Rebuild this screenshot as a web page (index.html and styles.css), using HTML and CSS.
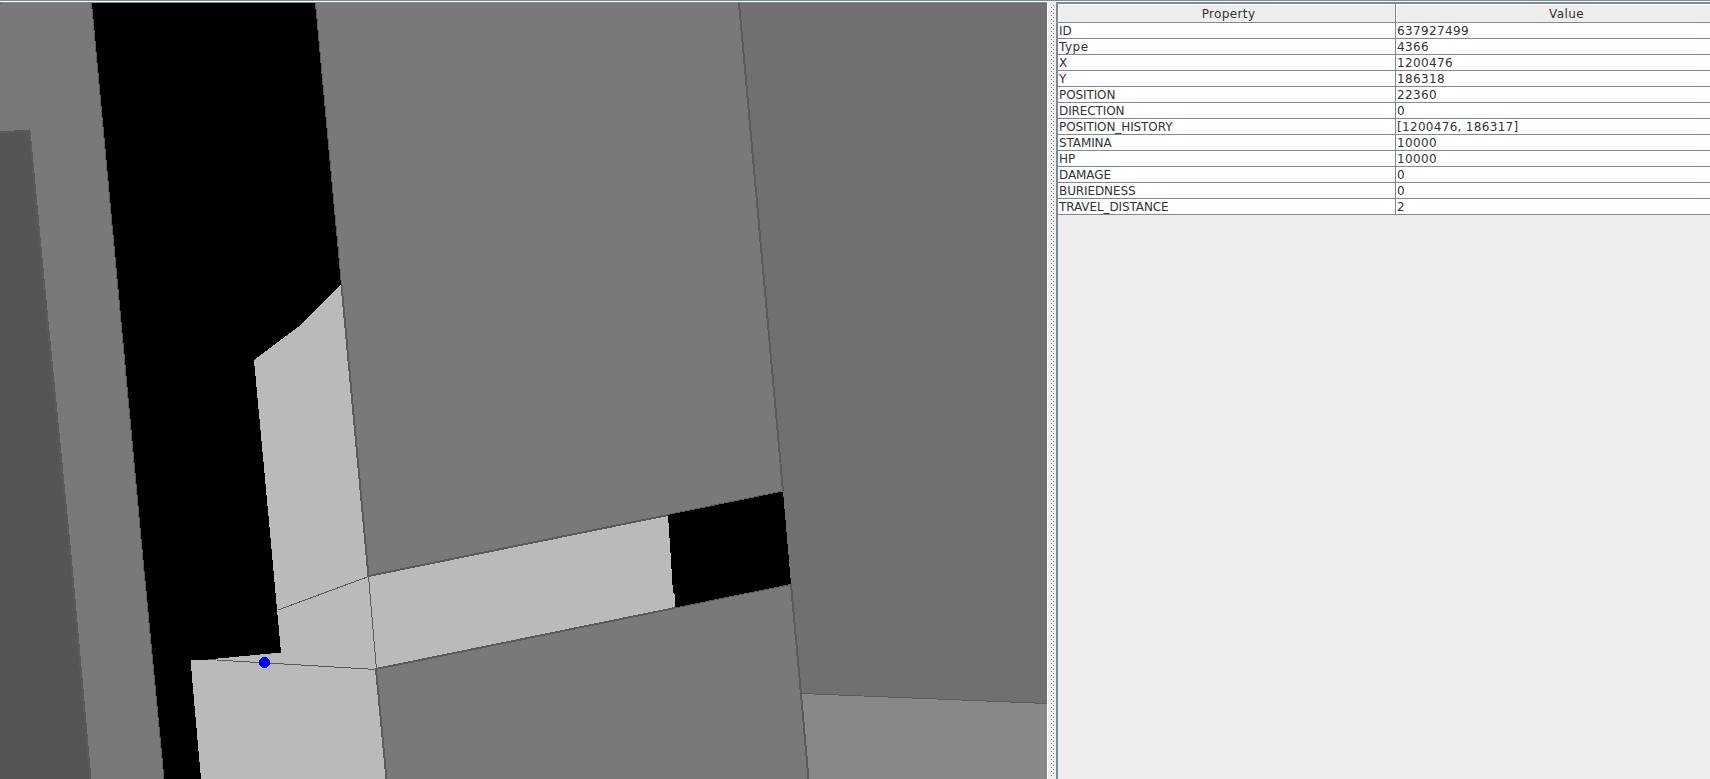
FILE: index.html
```
<!DOCTYPE html>
<html lang="en">
<head>
<meta charset="utf-8">
<title>Simulation viewer</title>
<link rel="stylesheet" href="styles.css">
</head>
<body>
<main class="viewer">
  <section class="map">
    <svg class="map-canvas" viewBox="0 3 1047 776" shape-rendering="crispEdges">
      <rect class="void" x="0" y="3" width="1047" height="776"/>
      <polygon class="building" points="0,3 91.5,3 119,300 143,560 164,779 0,779"/>
      <polygon class="building-dark" points="0,132 29.5,130 45.5,300 71,560 90.5,779 0,779"/>
      <polygon class="road" points="254,360 298,327 341,285 369,576 668,515 670,545 673,593 675,595 675,607 376,669 387,779 201,779 190.5,660 208,659.5 281,652.5 267,500"/>
      <polygon class="building" points="315.5,3 739,3 783,491 368.5,576"/>
      <polygon class="building" points="376.5,669 791,584 801,694 808.5,779 386,779"/>
      <polygon class="building-right" points="739,3 1047,3 1047,703.5 801,694 791,584 783,491"/>
      <polygon class="building-light" points="801,694 1047,703.5 1047,779 808.5,779"/>
      <g class="edge">
        <path d="M91.5 3 119 300 143 560 164 779"/>
        <path d="M315.5 3 341.5 285"/>
        <path d="M783 491 668 514.5M791 584.5 675 608"/>
      </g>
      <g class="edge-wide">
        <path d="M341.5 285 368.5 576 668 515M675 608 376 669 386.5 779"/>
        <path d="M739 3 783 491M791 584 801 694 808.5 779"/>
        <path d="M0 132.5 29.5 130.5 45.5 300 71 560 90.5 779"/>
      </g>
      <path class="edge" d="M278 610 368.5 576.5 376.5 669.5 208 659.5M802 693.5 1047 703.5M0 3.5H3"/>
      <circle class="agent" cx="264.5" cy="662.5" r="5.5"/>
    </svg>
  </section>
  <div class="divider">
    <svg class="grip" width="3" height="776">
      <defs><pattern id="bumps" width="4" height="4" patternUnits="userSpaceOnUse"><path class="bump" d="M0 3h1v1h-1zM2 1h1v1h-1z"/></pattern></defs>
      <rect width="3" height="773" fill="url(#bumps)"/>
    </svg>
  </div>
  <section class="inspector">
    <table class="properties">
      <thead><tr><th class="name">Property</th><th>Value</th></tr></thead>
      <tbody>
        <tr><td>ID</td><td>637927499</td></tr>
        <tr><td class="mixed">Type</td><td>4366</td></tr>
        <tr><td>X</td><td>1200476</td></tr>
        <tr><td>Y</td><td>186318</td></tr>
        <tr><td>POSITION</td><td>22360</td></tr>
        <tr><td>DIRECTION</td><td>0</td></tr>
        <tr><td>POSITION_HISTORY</td><td class="list">[1200476, 186317]</td></tr>
        <tr><td>STAMINA</td><td>10000</td></tr>
        <tr><td>HP</td><td>10000</td></tr>
        <tr><td>DAMAGE</td><td>0</td></tr>
        <tr><td>BURIEDNESS</td><td>0</td></tr>
        <tr><td>TRAVEL_DISTANCE</td><td>2</td></tr>
      </tbody>
    </table>
  </section>
</main>
</body>
</html>
```
FILE: styles.css
```
body {
  margin: 0;
  background: #eee;
  color: #333;
  font: 12px/14px "DejaVu Sans", sans-serif;
}
.viewer {
  box-sizing: border-box;
  display: flex;
  height: 779px;
  overflow: hidden;
  border-top: 1px solid #7a8a99;
  box-shadow: inset 0 1px #fff;
}
.map {
  box-sizing: border-box;
  flex: 0 0 1047px;
  margin-top: 1px;
  border-top: 1px solid #7a8a99;
}
.map-canvas {
  display: block;
  width: 1047px;
  height: 776px;
}
.void { fill: #000; }
.building { fill: #797979; }
.building-dark { fill: #555; }
.building-right { fill: #707070; }
.building-light { fill: #888; }
.road { fill: #bababa; }
.edge, .edge-wide {
  fill: none;
  stroke: #5b5b5b;
  stroke-width: 1;
}
.edge-wide { stroke-width: 2; }
.agent { fill: #00f; }
.divider {
  box-sizing: border-box;
  flex: 0 0 9px;
  margin-top: 1px;
  padding: 2px 0 0 4px;
  border-left: 1px solid #fff;
}
.grip { display: block; margin-left: -1px; }
.bump { fill: #7a8a99; }
.inspector {
  box-sizing: border-box;
  flex: 1;
  min-width: 0;
  overflow: hidden;
  margin-top: 1px;
  border: solid #7a8a99;
  border-width: 2px 0 0 2px;
}
.properties {
  width: 678px;
  table-layout: fixed;
  border-collapse: separate;
  border-spacing: 0;
}
.name { width: 338px; }
th, td {
  box-sizing: border-box;
  padding: 1px 0 0 1px;
  border-bottom: 1px solid #7a8a99;
  letter-spacing: 0.37px;
  white-space: nowrap;
}
th {
  height: 19px;
  padding-top: 2px;
  font-weight: normal;
  background: #eee;
  box-shadow: inset 1px 1px #fff;
}
th.name { padding-left: 4px; }
td {
  height: 16px;
  text-align: left;
  background: #fff;
}
th:first-child, td:first-child { border-right: 1px solid #7a8a99; }
td:first-child { letter-spacing: -0.1px; }
td.mixed:first-child { letter-spacing: 0.5px; }
td.list { letter-spacing: 0.31px; }
```
